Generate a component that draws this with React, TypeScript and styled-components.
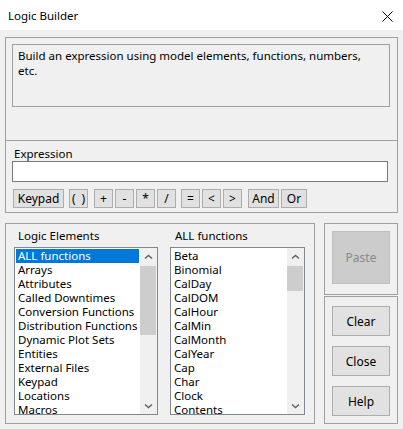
import React from 'react';
import styled, { createGlobalStyle } from 'styled-components';

const Global = createGlobalStyle`
  html, body { margin: 0; padding: 0; background: #f0f0f0; }
  body { font-family: "Noto Sans", "DejaVu Sans", sans-serif; }
  * { box-sizing: border-box; }
`;

const Window = styled.div`
  width: 403px;
  height: 429px;
  background: #f0f0f0;
  display: flex;
  flex-direction: column;
  overflow: hidden;
  font-size: 11.5px;
  color: #000;
`;

const TitleBar = styled.div`
  height: 30px;
  flex: none;
  background: #fff;
  display: flex;
  align-items: center;
  justify-content: space-between;
  padding: 1px 10px 0 8px;
`;

const Title = styled.span`
  font-family: "Noto Sans", sans-serif;
  font-size: 11.5px;
  color: #000;
`;

const CloseIcon = styled.svg`
  display: block;
  margin-top: 1px;
`;

const Body = styled.div`
  padding: 7px 5px 0 5px;
  display: flex;
  flex-direction: column;
`;

const UpperFrame = styled.div`
  height: 176px;
  border: 1px solid #a0a0a0;
  display: flex;
  flex-direction: column;
`;

const DescSection = styled.div`
  height: 103px;
  flex: none;
  border-bottom: 1px solid #a0a0a0;
  padding: 6px 7px 0 6px;
`;

const DescBox = styled.div`
  height: 63px;
  border: 1px solid #a0a0a0;
  padding: 3px 14px 2px 5px;
  line-height: 15px;
`;

const ExprSection = styled.div`
  padding: 5px 7px 4px 6px;
  display: flex;
  flex-direction: column;
`;

const Label = styled.div<{ $indent?: number }>`
  height: 15px;
  line-height: 15px;
  padding-left: ${(p) => p.$indent ?? 0}px;
  white-space: nowrap;
`;

const TextInput = styled.div`
  width: 376px;
  height: 21px;
  background: #fff;
  border: 1px solid #7a7a7a;
`;

const ButtonRow = styled.div`
  margin-top: 7px;
  margin-left: 1px;
  display: flex;
`;

const OpGroup = styled.div<{ $space?: number }>`
  display: flex;
  gap: 2px;
  margin-left: ${(p) => p.$space ?? 0}px;
`;

const OpButton = styled.div<{ $w: number }>`
  width: ${(p) => p.$w}px;
  height: 19px;
  background: #e1e1e1;
  border: 1px solid #adadad;
  display: flex;
  align-items: center;
  justify-content: center;
  font-size: 12px;
  line-height: 17px;
  white-space: pre;
`;

const LowerRow = styled.div`
  margin-top: 10px;
  display: flex;
  gap: 9px;
  height: 201px;
`;

const ListsGroup = styled.div`
  width: 310px;
  height: 201px;
  border: 1px solid #a0a0a0;
  padding: 4px 0 0 8px;
  display: grid;
  grid-template-columns: 144px 135px;
  column-gap: 12px;
`;

const ListColumn = styled.div`
  display: flex;
  flex-direction: column;
  gap: 4px;
`;

const ListBox = styled.div`
  height: 168px;
  background: #fff;
  border: 1px solid #828790;
  display: flex;
  overflow: hidden;
`;

const Items = styled.div`
  flex: 1;
  min-width: 0;
  padding: 1px 1px 0 1px;
  overflow: hidden;
`;

const Item = styled.div<{ $selected?: boolean }>`
  height: 14px;
  line-height: 14px;
  padding-left: 2px;
  white-space: nowrap;
  background: ${(p) => (p.$selected ? '#0078d7' : 'transparent')};
  color: ${(p) => (p.$selected ? '#fff' : '#000')};
`;

const ScrollBar = styled.div`
  width: 17px;
  flex: none;
  background: #f0f0f0;
  display: flex;
  flex-direction: column;
`;

const ArrowBox = styled.div`
  height: 17px;
  flex: none;
  display: flex;
  align-items: center;
  justify-content: center;
`;

const Track = styled.div`
  flex: 1;
  display: flex;
  flex-direction: column;
`;

const Thumb = styled.div`
  margin: 1px 1px 0 0;
  background: #cdcdcd;
`;

const SideColumn = styled.div`
  width: 74px;
  display: flex;
  flex-direction: column;
  gap: 1px;
`;

const SideBox = styled.div<{ $h: number; $pt: number; $gap?: number }>`
  height: ${(p) => p.$h}px;
  border: 1px solid #a0a0a0;
  padding: ${(p) => p.$pt}px 7px 0 7px;
  display: flex;
  flex-direction: column;
  gap: ${(p) => p.$gap ?? 0}px;
`;

const SideButton = styled.div<{ $h: number; $disabled?: boolean }>`
  width: 58px;
  height: ${(p) => p.$h}px;
  background: ${(p) => (p.$disabled ? '#cccccc' : '#e1e1e1')};
  border: 1px solid ${(p) => (p.$disabled ? '#bfbfbf' : '#adadad')};
  color: ${(p) => (p.$disabled ? '#8a8a8a' : '#000')};
  display: flex;
  align-items: center;
  justify-content: center;
  font-size: 12px;
`;

const Chevron = ({ down }: { down?: boolean }) => (
  <svg width="9" height="6" viewBox="0 0 9 6">
    <path
      d={down ? 'M1 1.5 L4.5 4.5 L8 1.5' : 'M1 4.5 L4.5 1.5 L8 4.5'}
      fill="none"
      stroke="#606060"
      strokeWidth="1.4"
    />
  </svg>
);

const elements = [
  'ALL functions',
  'Arrays',
  'Attributes',
  'Called Downtimes',
  'Conversion Functions',
  'Distribution Functions',
  'Dynamic Plot Sets',
  'Entities',
  'External Files',
  'Keypad',
  'Locations',
  'Macros',
];

const functions = [
  'Beta',
  'Binomial',
  'CalDay',
  'CalDOM',
  'CalHour',
  'CalMin',
  'CalMonth',
  'CalYear',
  'Cap',
  'Char',
  'Clock',
  'Contents',
];

const List = ({ items, selected, thumb }: { items: string[]; selected?: number; thumb: number }) => (
  <ListBox>
    <Items>
      {items.map((t, i) => (
        <Item key={t} $selected={i === selected}>
          {t}
        </Item>
      ))}
    </Items>
    <ScrollBar>
      <ArrowBox>
        <Chevron />
      </ArrowBox>
      <Track>
        <Thumb style={{ height: thumb }} />
      </Track>
      <ArrowBox>
        <Chevron down />
      </ArrowBox>
    </ScrollBar>
  </ListBox>
);

export default function App() {
  return (
    <>
      <Global />
      <Window>
        <TitleBar>
          <Title>Logic Builder</Title>
          <CloseIcon width="11" height="11" viewBox="0 0 11 11">
            <path d="M0.5 0.5 L10.5 10.5 M10.5 0.5 L0.5 10.5" stroke="#000" strokeWidth="1" />
          </CloseIcon>
        </TitleBar>
        <Body>
          <UpperFrame>
            <DescSection>
              <DescBox>Build an expression using model elements, functions, numbers, etc.</DescBox>
            </DescSection>
            <ExprSection>
              <Label $indent={2}>Expression</Label>
              <TextInput />
              <ButtonRow>
                <OpGroup>
                  <OpButton $w={51}>Keypad</OpButton>
                </OpGroup>
                <OpGroup $space={5}>
                  <OpButton $w={19}>{'(\u2002)'}</OpButton>
                </OpGroup>
                <OpGroup $space={6}>
                  <OpButton $w={19}>+</OpButton>
                  <OpButton $w={19}>-</OpButton>
                  <OpButton $w={19}>*</OpButton>
                  <OpButton $w={19}>/</OpButton>
                </OpGroup>
                <OpGroup $space={5}>
                  <OpButton $w={19}>=</OpButton>
                  <OpButton $w={19}>&lt;</OpButton>
                  <OpButton $w={19}>&gt;</OpButton>
                </OpGroup>
                <OpGroup $space={6}>
                  <OpButton $w={31}>And</OpButton>
                  <OpButton $w={26}>Or</OpButton>
                </OpGroup>
              </ButtonRow>
            </ExprSection>
          </UpperFrame>
          <LowerRow>
            <ListsGroup>
              <ListColumn>
                <Label $indent={4}>Logic Elements</Label>
                <List items={elements} selected={0} thumb={69} />
              </ListColumn>
              <ListColumn>
                <Label $indent={5}>ALL functions</Label>
                <List items={functions} thumb={25} />
              </ListColumn>
            </ListsGroup>
            <SideColumn>
              <SideBox $h={72} $pt={7}>
                <SideButton $h={53} $disabled>
                  Paste
                </SideButton>
              </SideBox>
              <SideBox $h={128} $pt={9} $gap={10}>
                <SideButton $h={30}>Clear</SideButton>
                <SideButton $h={30}>Close</SideButton>
                <SideButton $h={30}>Help</SideButton>
              </SideBox>
            </SideColumn>
          </LowerRow>
        </Body>
      </Window>
    </>
  );
}
